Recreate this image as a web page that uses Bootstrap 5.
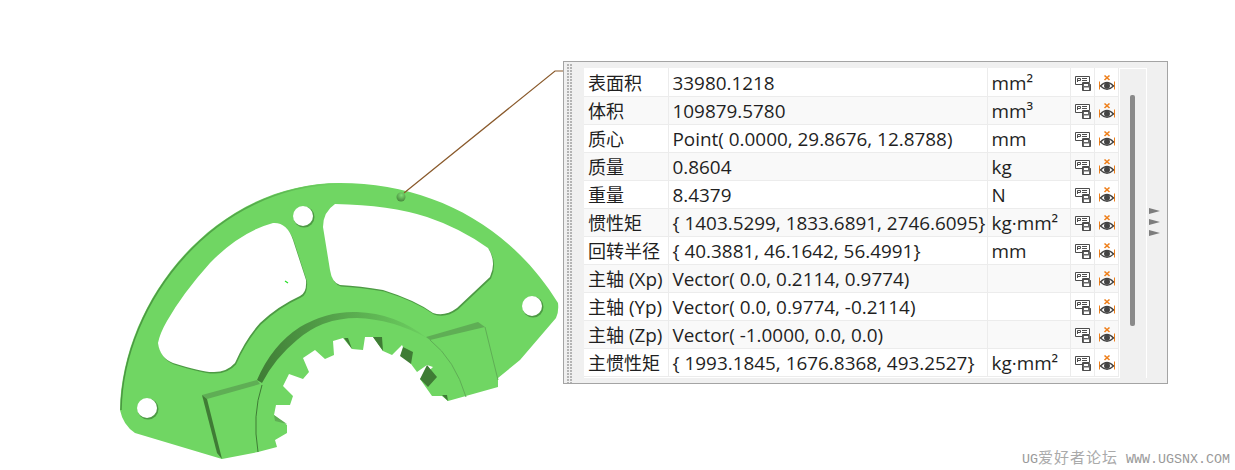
<!DOCTYPE html>
<html lang="en">
<head>
<meta charset="UTF-8" />
<title>Measure panel</title>
<link href="https://cdn.jsdelivr.net/npm/bootstrap@5.3.3/dist/css/bootstrap.min.css" rel="stylesheet" />
<style>
  body { margin: 0; background: #fff; overflow: hidden; }
  .stage { width: 1235px; height: 470px; padding: 61px 0 0 563px; position: relative; }
  .part-art { position: absolute; left: 0; top: 0; }
  .measure-panel { width: 605px; height: 323px; background: #f0f0f0; border: 1px solid #a4a4a4; position: relative; }
  .grip { width: 7px; margin: 1px 0 0 2px; background:
      linear-gradient(to right, #f0f0f0 1px, transparent 1px) 0 0 / 3px 3px,
      linear-gradient(#f0f0f0 1px, #b4b4b4 1px) 0 0 / 3px 3px; }
  .table-area { width: 563px; margin: 6px 0 0 11px; height: 310px; background: #fff; padding: 0; }
  .measure-table { width: 534px; table-layout: fixed; border-collapse: collapse; margin: 0; }
  .measure-table td { height: 28px; padding: 2px 0 0 4px; border: 1px solid #ececec; border-top: 0; border-left: 0; background: #fff; color: #1f1f1f;
      font: 18.9px/22px "Open Sans", "Noto Sans CJK SC", sans-serif; white-space: nowrap; overflow: hidden; }
  .measure-table tr:nth-child(even) td { background: #f9f9f9; }
  .measure-table td.ico-cell { padding: 0; text-align: center; }
  .cjk { font-size: 18px; line-height: 1; font-family: "Noto Sans CJK SC", sans-serif; }
  .ico-cell svg { display: block; margin: 0 auto; }
  .scroll-track { position: absolute; left: 556px; top: 7px; width: 26px; height: 309px; background: #f0f0f0; }
  .scroll-thumb { width: 5px; height: 231px; margin: 26px 0 0 10px; background: #8a8a8a; border-radius: 2px; }
  .flip-arrows { position: absolute; left: 585px; top: 146px; }
  .flip-arrows i { display: block; width: 0; height: 0; margin: 0 0 5px; border-left: 11px solid #7d7d7d; border-top: 3px solid transparent; border-bottom: 3px solid transparent; }
  .site-mark { position: absolute; left: 1022px; top: 449px; color: #999; font: 13.33px/16px "Liberation Mono", monospace; white-space: nowrap; }
  .site-mark span { font: 15px/16px "Noto Sans CJK SC", sans-serif; letter-spacing: 1px; color: #aaa; }
</style>
</head>
<body>
<svg width="0" height="0" class="position-absolute">
  <symbol id="ico-save" viewBox="0 0 20 20">
    <path d="M3.500 4.500h14v6h-7v2h-7z" fill="#fff" stroke="#4c4c4c"/>
    <path d="M5.500 10V6.500h3v2h-3M10 6.500h5M10 8.500h5" fill="none" stroke="#4c4c4c"/>
    <path d="M10.500 11.500h7l1 1v6h-8z" fill="#666" stroke="#4c4c4c"/>
    <path d="M12 12h4v2h-4zM12 15.500h5v2.500h-5z" fill="#fff"/>
  </symbol>
  <symbol id="ico-eye" viewBox="0 0 20 20">
    <path d="M8.500 3.500l5 4.500M13.500 3.500l-5 4.500" stroke="#ee7f1a" stroke-width="1.600" fill="none"/>
    <path d="M3.500 9.500v8M18.500 9.500v8M3.500 13.500h2M16.500 13.500h2" stroke="#ee7f1a" fill="none"/>
    <path d="M4.500 14q6.500-7 13 0q-6.500 6.500-13 0z" fill="#fff" stroke="#444" stroke-width="1.300"/>
    <circle cx="11" cy="13.700" r="3" fill="#444"/>
  </symbol>
</svg>

<div class="stage">
  <!-- the part, drawn on page coordinates -->
  <svg class="part-art" width="1235" height="470" viewBox="0 0 1235 470">
    <defs>
      <linearGradient id="band-shade" x1="257" y1="0" x2="427" y2="0" gradientUnits="userSpaceOnUse">
        <stop offset="0" stop-color="#3f7c35"/>
        <stop offset=".45" stop-color="#55a34b"/>
        <stop offset="1" stop-color="#6ccf60"/>
      </linearGradient>
      <linearGradient id="rim-shade" x1="120" y1="0" x2="340" y2="0" gradientUnits="userSpaceOnUse">
        <stop offset="0" stop-color="#4a9641"/>
        <stop offset=".6" stop-color="#55a94b"/>
        <stop offset="1" stop-color="#70d663"/>
      </linearGradient>
      <radialGradient id="pit-shade" cx=".55" cy=".3" r=".8">
        <stop offset="0" stop-color="#7fe073"/>
        <stop offset="1" stop-color="#3f7c35"/>
      </radialGradient>
      <path id="win-left" d="M158 343Q160 333 167 321Q183 293 210 263Q240 232 273 223Q287 222 293 240L306 280Q307 293 300 296Q278 306 260 323Q245 340 235 363Q227 372 214 372Q205 373 173 363Q160 358 158 343z"/>
      <path id="win-right" d="M323 227Q323 212 335 204Q390 205 427 217Q460 228 488 248Q497 262 490 277L457 308Q445 317 433 313Q415 300 383 290Q360 286 340 285Q332 283 330 270z"/>
    </defs>
    <path fill="#70d663" d="M222 459L135 433Q123 425 120 410C122 300 215 183 340 183C430 183 510 225 558 303Q559 312 556 318L520 360L498 378V387L448 401L442 396L432 396L420 379L433 367L427 365L417 372L411 364L402 345L392 355L383 351L373 337H365L363 350L352 349L343 338L333 341L334 355L325 359L315 350L303 358L309 372L303 379L289 374L283 386L293 396L290 405L276 405L274 415L287 425V433L275 440L277 447L258 452z"/>

    <use href="#win-left" fill="#4d9a44" x="1" y="1.500"/>
    <use href="#win-left" fill="#fff"/>
    <use href="#win-right" fill="#4d9a44" x="1" y="1.500"/>
    <use href="#win-right" fill="#fff"/>
    <circle cx="304" cy="217" r="10.500" fill="#4d9a44"/>
    <circle cx="303" cy="216" r="10" fill="#fff"/>
    <circle cx="148" cy="409" r="10.500" fill="#4d9a44"/>
    <circle cx="147" cy="408" r="10" fill="#fff"/>
    <circle cx="533" cy="307" r="10.500" fill="#4d9a44"/>
    <circle cx="532" cy="306" r="10" fill="#fff"/>

    <path d="M121 410C123 301 216 184 341 184" fill="none" stroke="url(#rim-shade)" stroke-width="1.500"/>
    <!-- hub step and tabs -->
    <path fill="url(#band-shade)" d="M257 380Q272 345 300 327Q327 311 357 312Q395 313 427 338Q392 319 357 318Q322 318 297 340Q275 358 262 383z"/>
    <path fill="#5fae55" d="M202 395L257 380L260 384L207 399z"/>
    <path fill="#3f7c35" d="M202 395L207 399L222 459L217 453z"/>
    <path d="M262 385Q252 415 258 452" fill="none" stroke="#3f7c35"/>
    <path fill="#5fae55" d="M426 337L478 322L485 327L430 340z"/>
    <path d="M485 327L498 380M430 340Q455 360 466 397" fill="none" stroke="#5fae55"/>
    <!-- visible tooth walls -->
    <path fill="#3f7c35" d="M344 338L352 349L348 338zM373 337H382L383 351zM403 347L413 352L411 364L400 356zM427 365L437 377L428 387L420 379zM442 395H447L448 401z"/>
    <path fill="#5fae55" d="M274 415L287 424L275 421z"/>
    <path d="M285 281l3 2" stroke="#22dd22" stroke-width="1.200"/>
    <!-- leader -->
    <circle cx="401" cy="197" r="4.500" fill="url(#pit-shade)"/>
    <path d="M404 193L555 71H563" fill="none" stroke="#8a5a2c" stroke-width="1.200"/>
  </svg>

  <div class="measure-panel d-flex">
    <div class="grip"></div>
    <div class="table-area">
      <table class="measure-table">
        <colgroup><col style="width:84px"><col style="width:319px"><col style="width:83px"><col style="width:24px"><col style="width:24px"></colgroup>
        <tbody>
          <tr><td><span class="cjk">表面积</span></td><td>33980.1218</td><td>mm²</td><td class="ico-cell"><svg width="20" height="20"><use href="#ico-save"/></svg></td><td class="ico-cell"><svg width="20" height="20"><use href="#ico-eye"/></svg></td></tr>
          <tr><td><span class="cjk">体积</span></td><td>109879.5780</td><td>mm³</td><td class="ico-cell"><svg width="20" height="20"><use href="#ico-save"/></svg></td><td class="ico-cell"><svg width="20" height="20"><use href="#ico-eye"/></svg></td></tr>
          <tr><td><span class="cjk">质心</span></td><td>Point( 0.0000, 29.8676, 12.8788)</td><td>mm</td><td class="ico-cell"><svg width="20" height="20"><use href="#ico-save"/></svg></td><td class="ico-cell"><svg width="20" height="20"><use href="#ico-eye"/></svg></td></tr>
          <tr><td><span class="cjk">质量</span></td><td>0.8604</td><td>kg</td><td class="ico-cell"><svg width="20" height="20"><use href="#ico-save"/></svg></td><td class="ico-cell"><svg width="20" height="20"><use href="#ico-eye"/></svg></td></tr>
          <tr><td><span class="cjk">重量</span></td><td>8.4379</td><td>N</td><td class="ico-cell"><svg width="20" height="20"><use href="#ico-save"/></svg></td><td class="ico-cell"><svg width="20" height="20"><use href="#ico-eye"/></svg></td></tr>
          <tr><td><span class="cjk">惯性矩</span></td><td>{ 1403.5299, 1833.6891, 2746.6095}</td><td>kg·mm²</td><td class="ico-cell"><svg width="20" height="20"><use href="#ico-save"/></svg></td><td class="ico-cell"><svg width="20" height="20"><use href="#ico-eye"/></svg></td></tr>
          <tr><td><span class="cjk">回转半径</span></td><td>{ 40.3881, 46.1642, 56.4991}</td><td>mm</td><td class="ico-cell"><svg width="20" height="20"><use href="#ico-save"/></svg></td><td class="ico-cell"><svg width="20" height="20"><use href="#ico-eye"/></svg></td></tr>
          <tr><td><span class="cjk">主轴</span> (Xp)</td><td>Vector( 0.0, 0.2114, 0.9774)</td><td></td><td class="ico-cell"><svg width="20" height="20"><use href="#ico-save"/></svg></td><td class="ico-cell"><svg width="20" height="20"><use href="#ico-eye"/></svg></td></tr>
          <tr><td><span class="cjk">主轴</span> (Yp)</td><td>Vector( 0.0, 0.9774, -0.2114)</td><td></td><td class="ico-cell"><svg width="20" height="20"><use href="#ico-save"/></svg></td><td class="ico-cell"><svg width="20" height="20"><use href="#ico-eye"/></svg></td></tr>
          <tr><td><span class="cjk">主轴</span> (Zp)</td><td>Vector( -1.0000, 0.0, 0.0)</td><td></td><td class="ico-cell"><svg width="20" height="20"><use href="#ico-save"/></svg></td><td class="ico-cell"><svg width="20" height="20"><use href="#ico-eye"/></svg></td></tr>
          <tr><td><span class="cjk">主惯性矩</span></td><td>{ 1993.1845, 1676.8368, 493.2527}</td><td>kg·mm²</td><td class="ico-cell"><svg width="20" height="20"><use href="#ico-save"/></svg></td><td class="ico-cell"><svg width="20" height="20"><use href="#ico-eye"/></svg></td></tr>
        </tbody>
      </table>
    </div>
    <div class="scroll-track"><div class="scroll-thumb"></div></div>
    <div class="flip-arrows"><i></i><i></i><i></i></div>
  </div>
  <div class="site-mark">UG<span>爱好者论坛</span> WWW.UGSNX.COM</div>
</div>
<script src="https://cdn.jsdelivr.net/npm/bootstrap@5.3.3/dist/js/bootstrap.bundle.min.js"></script>
</body>
</html>
